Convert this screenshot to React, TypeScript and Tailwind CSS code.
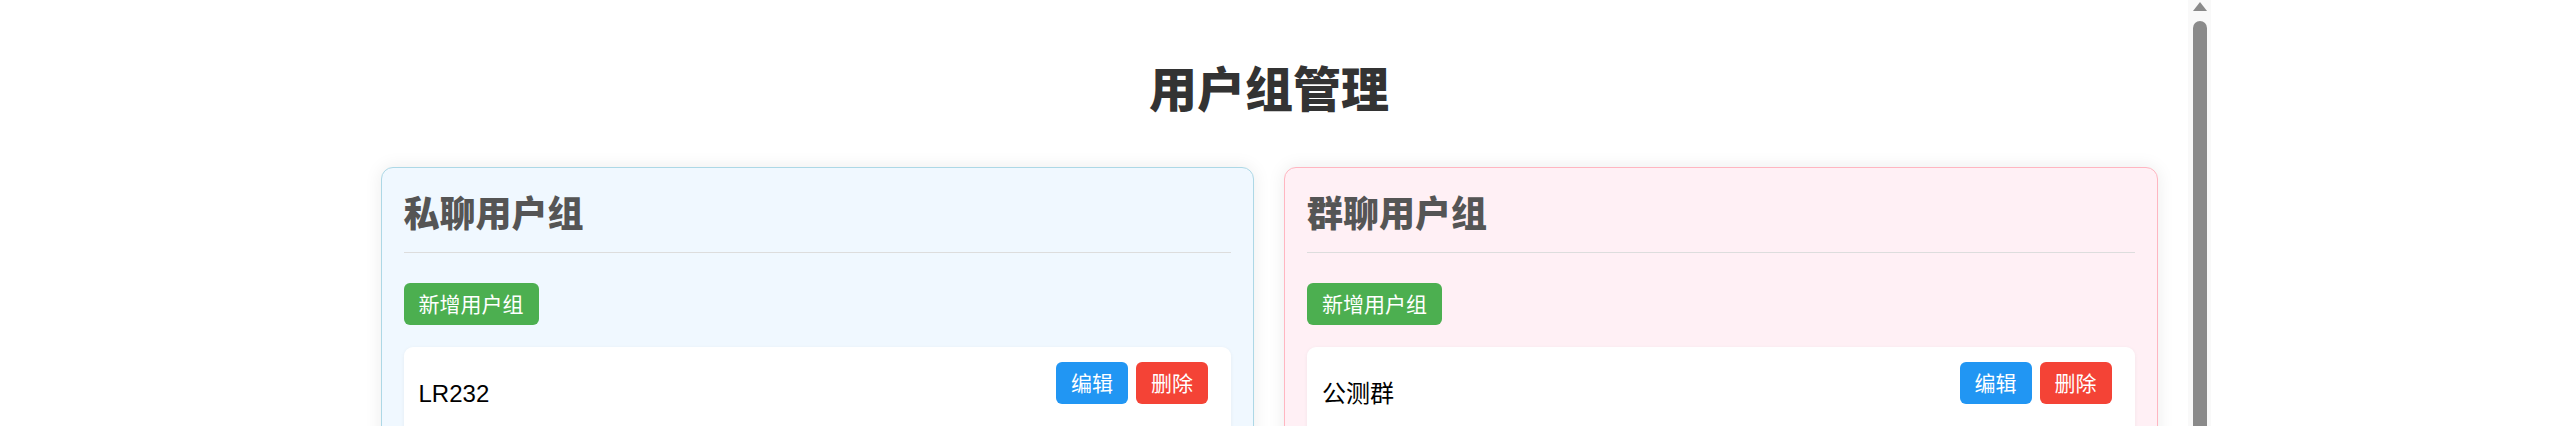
import React from "react";

type Group = { id: number; name: string };

const privateGroups: Group[] = [{ id: 1, name: "LR232" }];
const publicGroups: Group[] = [{ id: 2, name: "公测群" }];

const GroupItem = ({ group }: { group: Group }) => {
  return (
    <div className="flex justify-between items-start bg-white rounded-[9px] pl-[15px] pr-[23px] py-[15px] h-[140px] shadow-[0_1px_4px_rgba(0,0,0,0.05)]">
      <span className="mt-[14px] text-[24px] leading-[36px] text-black">{group.name}</span>
      <div className="flex gap-[8px]">
        <button className="h-[42px] px-[15px] rounded-[6px] bg-[#2196f3] text-white text-[21px] leading-none">
          编辑
        </button>
        <button className="h-[42px] px-[15px] rounded-[6px] bg-[#f44336] text-white text-[21px] leading-none">
          删除
        </button>
      </div>
    </div>
  );
};

const GroupPanel = ({
  title,
  groups,
  tone,
}: {
  title: string;
  groups: Group[];
  tone: "private" | "public";
}) => {
  const panelClass =
    tone === "private"
      ? "bg-[#f0f8ff] border-[#add8e6]"
      : "bg-[#fff0f5] border-[#ffb6c1]";

  return (
    <div
      className={`border rounded-[12px] px-[22px] pt-[22px] pb-[22px] shadow-[0_0_18px_rgba(0,0,0,0.08)] ${panelClass}`}
    >
      <h2 className="text-[36px] font-black leading-[50px] text-[#555] pb-[12px] border-b border-[#ddd]">
        {title}
      </h2>
      <button className="mt-[30px] mb-[22px] h-[42px] px-[15px] rounded-[6px] bg-[#4caf50] text-white text-[21px] leading-none">
        新增用户组
      </button>
      <div className="flex flex-col gap-[15px]">
        {groups.map((g) => (
          <GroupItem key={g.id} group={g} />
        ))}
      </div>
    </div>
  );
};

export default function App() {
  return (
    <div
      className="relative w-full h-[426px] overflow-hidden bg-white text-[#333]"
      style={{ fontFamily: '"Liberation Sans", Arial, "Noto Sans CJK SC", sans-serif' }}
    >
      <div className="w-[2538px]">
        <div className="w-[1777px] mx-auto">
          <h1 className="text-center text-[48px] font-black text-[#333] leading-[64px] pt-[59px] pb-[44px]">
            用户组管理
          </h1>
          <div className="grid grid-cols-2 gap-[30px]">
            <GroupPanel title="私聊用户组" groups={privateGroups} tone="private" />
            <GroupPanel title="群聊用户组" groups={publicGroups} tone="public" />
          </div>
        </div>
      </div>

      {/* page scrollbar */}
      <div className="absolute left-[2188px] top-0 w-[23px] h-full bg-[#f9f9f9] flex flex-col items-center">
        <svg width="14" height="10" viewBox="0 0 14 10" className="mt-[2px]">
          <path d="M7 0 L14 9 L0 9 Z" fill="#8a8a8a" />
        </svg>
        <div className="mt-[9px] w-[14px] flex-1 bg-[#8a8a8a] rounded-t-[7px]" />
      </div>
    </div>
  );
}
